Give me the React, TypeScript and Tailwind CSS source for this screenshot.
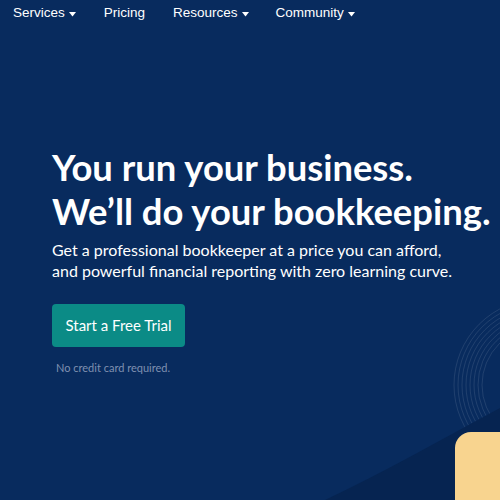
const navItems = [
  { name: "Services", caret: true },
  { name: "Pricing", caret: false },
  { name: "Resources", caret: true },
  { name: "Community", caret: true },
]

const Caret = () => (
  <svg width="7" height="5" viewBox="0 0 7 5" className="ml-[4px] mt-[2px]">
    <path d="M0 0h7L3.5 4.5z" fill="currentColor" />
  </svg>
)

const Rings = () => (
  <svg className="absolute inset-0 pointer-events-none" width="500" height="500" viewBox="0 0 500 500" fill="none">
    {[0, 1, 2, 3, 4, 5, 6, 7].map((i) => (
      <circle
        key={i}
        cx={540}
        cy={385}
        r={86 - i * 4}
        stroke="#ffffff"
        strokeOpacity="0.1"
        strokeWidth="1"
      />
    ))}
  </svg>
)

export default function App() {
  return (
    <div className="relative w-[500px] h-[500px] overflow-hidden bg-[#082b5e] text-white font-['Liberation_Sans',Arial,sans-serif]">
      <Rings />
      {/* darker diagonal band */}
      <svg className="absolute inset-0 pointer-events-none" width="500" height="500" viewBox="0 0 500 500">
        <path d="M325 500 C 385 472, 440 440, 500 408 L500 500 Z" fill="#062451" />
      </svg>
      <div className="absolute left-[455px] top-[432px] w-[120px] h-[120px] rounded-[16px] bg-[#f8d48f]" />

      <nav className="relative flex items-center h-[27px] pl-[13px] text-[13.5px] text-white">
        {navItems.map((item, i) => (
          <div
            key={item.name}
            className={`flex items-center ${i === 0 ? "" : i === 1 ? "ml-[28px]" : i === 2 ? "ml-[28px]" : "ml-[27px]"}`}
          >
            <span>{item.name}</span>
            {item.caret && <Caret />}
          </div>
        ))}
      </nav>

      <main className="relative pl-[52px] pt-[118px]">
        <h1 className="whitespace-nowrap font-['Lato',sans-serif] font-bold text-[36.4px] leading-[44px]">
          You run your business.
          <br />
          We’ll do your bookkeeping.
        </h1>
        <p className="mt-[6px] whitespace-nowrap font-['Lato',sans-serif] text-[16px] leading-[21px] text-white">
          Get a professional bookkeeper at a price you can afford,
          <br />
          and powerful financial reporting with zero learning curve.
        </p>
        <button className="mt-[23px] h-[43px] w-[133px] rounded-[4px] bg-[#0b8b86] text-[15px] font-['Lato',sans-serif] text-white">
          Start a Free Trial
        </button>
        <p className="mt-[13px] ml-[4px] text-[11px] font-['Lato',sans-serif] text-[#7f90b0]">No credit card required.</p>
      </main>
    </div>
  )
}
